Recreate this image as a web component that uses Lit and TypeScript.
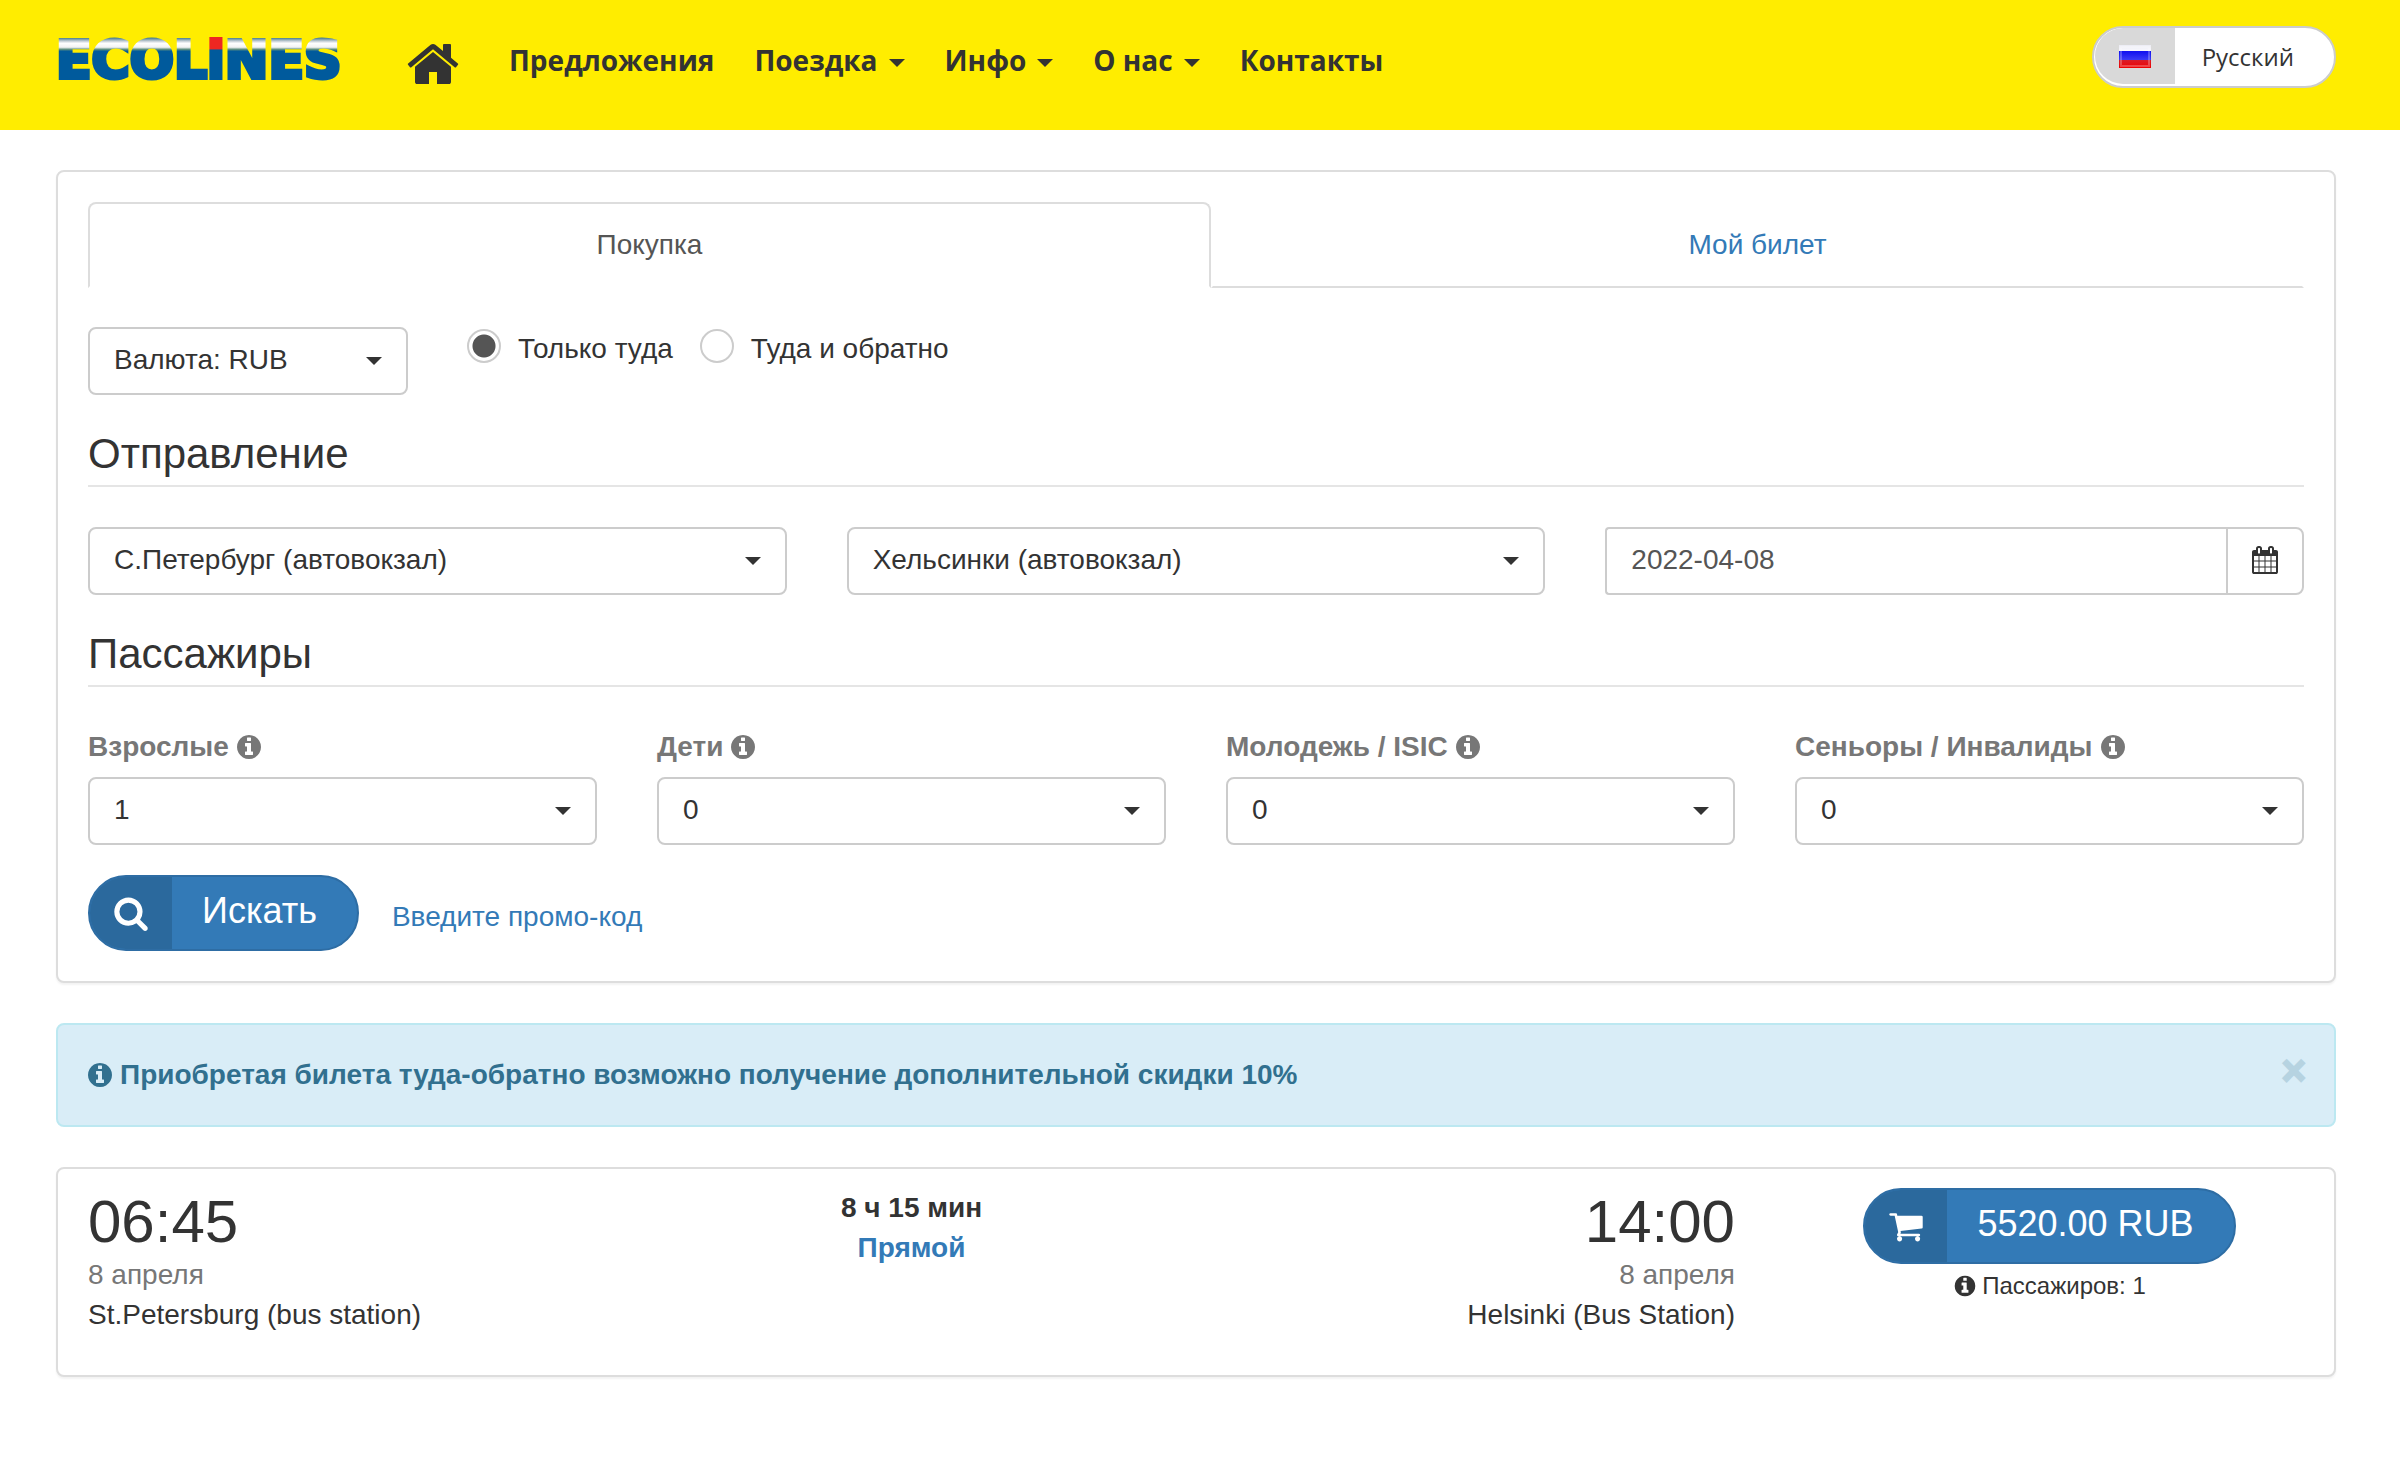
import { LitElement, html, css, svg } from "lit";
import { customElement, property, state } from "lit/decorators.js";

const ICONS: Record<string, string> = {
  home: "M1472 992v480q0 26-19 45t-45 19h-384v-384h-256v384h-384q-26 0-45-19t-19-45v-480q0-1 .5-3t.5-3l575-474 575 474q1 2 1 6zm223-69l-62 74q-8 9-21 11h-3q-13 0-21-7l-692-577-692 577q-12 8-24 7-13-2-21-11l-62-74q-8-10-7-23.5t11-21.5l719-599q32-26 76-26t76 26l244 204v-195q0-14 9-23t23-9h192q14 0 23 9t9 23v408l219 182q10 8 11 21.5t-7 23.5z",
  info: "M1152 1376v-160q0-14-9-23t-23-9h-96v-512q0-14-9-23t-23-9h-320q-14 0-23 9t-9 23v160q0 14 9 23t23 9h96v320h-96q-14 0-23 9t-9 23v160q0 14 9 23t23 9h448q14 0 23-9t9-23zm-128-896v-160q0-14-9-23t-23-9h-192q-14 0-23 9t-9 23v160q0 14 9 23t23 9h192q14 0 23-9t9-23zm640 416q0 209-103 385.5t-279.5 279.5-385.5 103-385.5-103-279.5-279.5-103-385.5 103-385.5 279.5-279.5 385.5-103 385.5 103 279.5 279.5 103 385.5z",
  search: "M1216 832q0-185-131.5-316.5t-316.5-131.5-316.5 131.5-131.5 316.5 131.5 316.5 316.5 131.5 316.5-131.5 131.5-316.5zm512 832q0 52-38 90t-90 38q-54 0-90-38l-343-342q-179 124-399 124-143 0-273.5-55.5t-225-150-150-225-55.5-273.5 55.5-273.5 150-225 225-150 273.5-55.5 273.5 55.5 225 150 150 225 55.5 273.5q0 220-124 399l343 343q37 37 37 90z",
  cart: "M704 1536q0 52-38 90t-90 38-90-38-38-90 38-90 90-38 90 38 38 90zm896 0q0 52-38 90t-90 38-90-38-38-90 38-90 90-38 90 38 38 90zm128-1088v512q0 24-16.5 42.5t-40.5 21.5l-1044 122q13 60 13 70 0 16-24 64h920q26 0 45 19t19 45-19 45-45 19h-1024q-26 0-45-19t-19-45q0-11 8-31.5t16-36 21.5-40 15.5-29.5l-177-823h-204q-26 0-45-19t-19-45 19-45 45-19h256q16 0 28.5 6.5t19.5 15.5 13 24.5 8 26 5.5 29.5 4.5 26h1201q26 0 45 19t19 45z",
  calendar: "M192 1664h288v-288h-288v288zm352 0h320v-288h-320v288zm-352-352h288v-320h-288v320zm352 0h320v-320h-320v320zm-352-384h288v-288h-288v288zm736 736h320v-288h-320v288zm-384-736h320v-288h-320v288zm768 736h288v-288h-288v288zm-384-352h320v-320h-320v320zm-352-864v-288q0-13-9.5-22.5t-22.5-9.5h-64q-13 0-22.5 9.5t-9.5 22.5v288q0 13 9.5 22.5t22.5 9.5h64q13 0 22.5-9.5t9.5-22.5zm736 864h288v-320h-288v320zm-384-384h320v-288h-320v288zm384 0h288v-288h-288v288zm32-480v-288q0-13-9.5-22.5t-22.5-9.5h-64q-13 0-22.5 9.5t-9.5 22.5v288q0 13 9.5 22.5t22.5 9.5h64q13 0 22.5-9.5t9.5-22.5zm384-64v1280q0 52-38 90t-90 38h-1408q-52 0-90-38t-38-90v-1280q0-52 38-90t90-38h128v-96q0-66 47-113t113-47h64q66 0 113 47t47 113v96h384v-96q0-66 47-113t113-47h64q66 0 113 47t47 113v96h128q52 0 90 38t38 90z",
};

const icon = (name: string, cls = "icon") => html`
  <svg class=${cls} viewBox="0 0 1792 1792" aria-hidden="true">${svg`<path d=${ICONS[name]} fill="currentColor"></path>`}</svg>`;

const base = css`
  * { box-sizing: border-box; }
  :host { display: block; }
  button, input, select { font: inherit; color: inherit; margin: 0; }
  a { color: #337ab7; text-decoration: none; }
  .icon { width: 28px; height: 28px; flex: none; display: block; }
`;

@customElement("site-header")
class SiteHeader extends LitElement {
  static styles = [base, css`
    .bar {
      display: flex; align-items: flex-start; justify-content: space-between;
      height: 130px; padding: 0 64px 0 56px;
      background: #ffed00; color: #333;
      font-family: "Open Sans", "Noto Sans", sans-serif;
    }
    .left { display: flex; align-items: center; height: 120px; }
    .logo { display: block; margin-right: 47px; }
    .mark { display: block; width: 302px; height: 80px; overflow: visible; }
    .word { font: bold 52px "DejaVu Sans", sans-serif; fill: url(#ink); stroke: url(#ink); stroke-width: 4px; }
    .dot { fill: url(#reddot); stroke: url(#reddot); }
    .home { color: #333; padding-top: 8px; }
    .big { width: 56px; height: 56px; display: block; }
    .nav { display: flex; gap: 40px; margin-left: 48px; }
    .link {
      display: flex; align-items: center; gap: 11px;
      color: #333; font-weight: 700; font-size: 28px; line-height: 40px;
    }
    .caret { border: 8px solid transparent; border-top-color: #333; border-bottom: 0; margin-top: 6px; }
    .lang {
      display: flex; align-items: stretch; height: 62px; margin-top: 26px; padding: 0;
      border: 2px solid #ccc; border-radius: 31px; background: #fff; overflow: hidden;
      font-size: 24px;
    }
    .flagbox {
      display: flex; align-items: center; justify-content: center;
      width: 80px; margin: 0 0 2px 1px; background: #d9d9d9; border-radius: 29px 0 0 29px;
    }
    .flag { width: 32px; height: 23px; display: block; }
    .name { padding: 0 40px 0 27px; align-self: center; line-height: 40px; }
  `];

  private items = [
    { label: "Предложения", menu: false },
    { label: "Поездка", menu: true },
    { label: "Инфо", menu: true },
    { label: "О нас", menu: true },
    { label: "Контакты", menu: false },
  ];

  render() {
    return html`
      <header class="bar">
        <div class="left">
          <a class="logo" href="#">
            <svg class="mark" viewBox="0 0 302 80">
              <defs>
                <linearGradient id="ink" gradientUnits="userSpaceOnUse" x1="0" y1="18" x2="0" y2="62">
                  <stop offset="0" stop-color="#4a7f8c"></stop>
                  <stop offset=".07" stop-color="#c3ccd4"></stop>
                  <stop offset=".12" stop-color="#ffffff"></stop>
                  <stop offset=".21" stop-color="#f2f2f2"></stop>
                  <stop offset=".26" stop-color="#5f8f80"></stop>
                  <stop offset=".3" stop-color="#005a9c"></stop>
                </linearGradient>
                <linearGradient id="reddot" gradientUnits="userSpaceOnUse" x1="0" y1="18" x2="0" y2="62">
                  <stop offset=".25" stop-color="#ee2722"></stop>
                  <stop offset=".27" stop-color="#005a9c"></stop>
                </linearGradient>
              </defs>
              <text class="word" x="0" y="58">ECOL<tspan class="dot">i</tspan>NES</text>
            </svg>
          </a>
          <a class="home" href="#" aria-label="Главная">${icon("home", "big")}</a>
          <nav class="nav">
            ${this.items.map((i) => html`<a class="link" href="#">${i.label}${i.menu ? html`<span class="caret"></span>` : ""}</a>`)}
          </nav>
        </div>
        <button class="lang" type="button">
          <span class="flagbox">
            <svg class="flag" viewBox="0 0 32 23" aria-hidden="true">
              <defs>
                <linearGradient id="w" x2="0" y2="1"><stop offset="0" stop-color="#ececf4"></stop><stop offset="1" stop-color="#fafaff"></stop></linearGradient>
                <linearGradient id="b" x2="0" y2="1"><stop offset="0" stop-color="#1010f0"></stop><stop offset="1" stop-color="#3d3df5"></stop></linearGradient>
                <linearGradient id="r" x2="0" y2="1"><stop offset="0" stop-color="#d81c28"></stop><stop offset="1" stop-color="#f00000"></stop></linearGradient>
              </defs>
              <rect width="32" height="7" fill="url(#w)"></rect>
              <rect y="6" width="32" height="9" fill="url(#b)"></rect>
              <rect y="15" width="32" height="8" fill="url(#r)"></rect>
              <rect x="2" y="2" width="28" height="19" fill="none" stroke="#fff" stroke-opacity=".25" stroke-width="2"></rect>
            </svg>
          </span>
          <span class="name">Русский</span>
        </button>
      </header>`;
  }
}

@customElement("select-box")
class SelectBox extends LitElement {
  @property() label = "";
  @property() caption = "";
  @property({ type: Array }) options: string[] = [];

  static styles = [base, css`
    .field { display: flex; flex-direction: column; gap: 10px; }
    .caption {
      display: flex; align-items: center; gap: 6px;
      font-weight: 700; line-height: 40px; color: #777;
    }
    .box { display: grid; align-items: center; }
    .box::after {
      content: ""; grid-area: 1 / 1; justify-self: end; margin-right: 26px;
      border: 8px solid transparent; border-top-color: #333; border-bottom: 0; pointer-events: none;
    }
    .control {
      grid-area: 1 / 1; width: 100%; height: 68px; padding: 0 60px 2px 24px;
      appearance: none; background: #fff; border: 2px solid #ccc; border-radius: 8px;
      line-height: 40px;
    }
  `];

  render() {
    return html`
      <div class="field">
        ${this.caption ? html`<label class="caption" for="control">${this.caption}${icon("info")}</label>` : ""}
        <div class="box">
          <select class="control" id="control" aria-label=${this.caption || this.label}>
            ${this.options.map((o) => html`<option>${o}</option>`)}
          </select>
        </div>
      </div>`;
  }
}

@customElement("pill-button")
class PillButton extends LitElement {
  @property() icon = "";
  @property() text = "";

  static styles = [base, css`
    .pill {
      display: flex; height: 76px; padding: 0; overflow: hidden; white-space: nowrap;
      border: 2px solid #2e6da4; border-radius: 38px; background: #337ab7; color: #fff;
      font-size: 36px; line-height: 48px; cursor: pointer;
    }
    .side {
      display: flex; align-items: center; justify-content: center;
      width: 82px; background: #2b699d;
    }
    .glyph { width: 36px; height: 36px; display: block; }
    .text { padding: 10px 40px 0 30px; }
  `];

  render() {
    return html`
      <button class="pill" type="button">
        <span class="side">${icon(this.icon, "glyph")}</span><span class="text">${this.text}</span>
      </button>`;
  }
}

@customElement("search-panel")
class SearchPanel extends LitElement {
  @state() private trip = "one";

  static styles = [base, css`
    .panel {
      padding: 30px; background: #fff;
      border: 2px solid #ddd; border-radius: 8px; box-shadow: 0 2px 2px rgba(0, 0, 0, 0.05);
    }
    .tabs { display: grid; grid-template-columns: 1123fr 1093fr; margin-bottom: 39px; }
    .tab {
      height: 86px; padding: 20px; text-align: center; line-height: 40px;
      background: none; border: 2px solid transparent; border-bottom-color: #ddd; color: #337ab7;
    }
    .tab.active {
      color: #555; border-color: #ddd; border-bottom-color: #fff; border-radius: 8px 8px 0 0;
    }
    .top { display: flex; align-items: flex-start; gap: 59px; margin-bottom: 30px; }
    .currency { width: 320px; }
    .radios { display: flex; gap: 27px; padding-top: 2px; }
    .radio { display: flex; align-items: center; gap: 17px; line-height: 40px; }
    .mark {
      appearance: none; width: 34px; height: 34px; margin-bottom: 6px; background: #fff;
      border: 2px solid #ccc; border-radius: 50%;
    }
    .mark:checked { background: radial-gradient(circle, #555 11px, #fff 12px); }
    .legend {
      margin: 0 0 40px; padding-bottom: 2px; font-size: 42px; font-weight: 400; line-height: 58px;
      border-bottom: 2px solid #e5e5e5;
    }
    .three, .four { display: grid; gap: 60px; margin-bottom: 30px; }
    .three { grid-template-columns: repeat(3, 1fr); }
    .four { grid-template-columns: repeat(4, 1fr); }
    .date { display: flex; height: 68px; }
    .value {
      flex: 1; min-width: 0; padding: 0 24px 2px; color: #555; background: #fff;
      border: 2px solid #ccc; border-right: 0; border-radius: 4px 0 0 4px;
    }
    .pick {
      display: flex; align-items: center; justify-content: center; width: 78px; padding: 0 0 2px;
      background: #fff; border: 2px solid #ccc; border-radius: 0 8px 8px 0;
    }
    .actions { display: flex; align-items: center; gap: 33px; }
    .promo { padding-top: 7px; line-height: 40px; }
  `];

  private groups = [
    { caption: "Взрослые", options: ["1"] },
    { caption: "Дети", options: ["0"] },
    { caption: "Молодежь / ISIC", options: ["0"] },
    { caption: "Сеньоры / Инвалиды", options: ["0"] },
  ];

  private radio(value: string, label: string) {
    return html`<label class="radio"><input class="mark" type="radio" name="trip"
      .checked=${this.trip === value} @change=${() => (this.trip = value)} />${label}</label>`;
  }

  render() {
    return html`
      <section class="panel">
        <div class="tabs" role="tablist">
          <button class="tab active" type="button" role="tab">Покупка</button>
          <button class="tab" type="button" role="tab">Мой билет</button>
        </div>
        <div class="top">
          <select-box class="currency" label="Валюта" .options=${["Валюта: RUB"]}></select-box>
          <div class="radios">${this.radio("one", "Только туда")}${this.radio("both", "Туда и обратно")}</div>
        </div>
        <h2 class="legend">Отправление</h2>
        <div class="three">
          <select-box label="Откуда" .options=${["С.Петербург (автовокзал)"]}></select-box>
          <select-box label="Куда" .options=${["Хельсинки (автовокзал)"]}></select-box>
          <div class="date">
            <input class="value" type="text" value="2022-04-08" aria-label="Дата" />
            <button class="pick" type="button" aria-label="Календарь">${icon("calendar")}</button>
          </div>
        </div>
        <h2 class="legend">Пассажиры</h2>
        <div class="four">
          ${this.groups.map((g) => html`<select-box .caption=${g.caption} .options=${g.options}></select-box>`)}
        </div>
        <div class="actions">
          <pill-button icon="search" text="Искать"></pill-button>
          <a class="promo" href="#">Введите промо-код</a>
        </div>
      </section>`;
  }
}

@customElement("notice-bar")
class NoticeBar extends LitElement {
  static styles = [base, css`
    .notice {
      display: flex; align-items: center; gap: 6px; padding: 30px 28px;
      color: #31708f; background: #d9edf7; border: 2px solid #bce8f1; border-radius: 8px;
      font-weight: 700; line-height: 40px;
    }
    .close {
      margin-left: auto; padding: 0 0 8px; height: 40px; border: 0; background: none; opacity: 0.2;
      font-size: 42px; line-height: 32px; -webkit-text-stroke: 2px #31708f;
    }
  `];

  render() {
    return html`
      <div class="notice" role="alert">
        ${icon("info")}<span>Приобретая билета туда-обратно возможно получение дополнительной скидки 10%</span>
        <button class="close" type="button" aria-label="Закрыть">×</button>
      </div>`;
  }
}

@customElement("trip-card")
class TripCard extends LitElement {
  static styles = [base, css`
    .card {
      display: grid; grid-template-columns: repeat(4, 1fr); gap: 60px;
      padding: 19px 30px 40px; background: #fff; line-height: 40px;
      border: 2px solid #ddd; border-radius: 8px; box-shadow: 0 2px 2px rgba(0, 0, 0, 0.05);
    }
    .route { grid-column: span 3; display: grid; grid-template-columns: 1fr auto 1fr; }
    .time { font-size: 60px; line-height: 67px; }
    .day { color: #777; }
    .middle { text-align: center; font-weight: 700; }
    .end { text-align: right; }
    .buy { display: flex; flex-direction: column; align-items: center; }
    .count {
      display: flex; align-items: center; gap: 5px; font-size: 24px; line-height: 44px;
    }
    .small { width: 24px; height: 24px; display: block; }
  `];

  render() {
    return html`
      <article class="card">
        <div class="route">
          <div>
            <div class="time">06:45</div>
            <div class="day">8 апреля</div>
            <div>St.Petersburg (bus station)</div>
          </div>
          <div class="middle">
            <div>8 ч 15 мин</div>
            <a href="#">Прямой</a>
          </div>
          <div class="end">
            <div class="time">14:00</div>
            <div class="day">8 апреля</div>
            <div>Helsinki (Bus Station)</div>
          </div>
        </div>
        <div class="buy">
          <pill-button icon="cart" text="5520.00 RUB"></pill-button>
          <div class="count">${icon("info", "small")}<span>Пассажиров: 1</span></div>
        </div>
      </article>`;
  }
}

@customElement("app-root")
class AppRoot extends LitElement {
  static styles = css`
    :host {
      display: block; min-height: 100vh; background: #fff; color: #333;
      font: 28px/40px "Liberation Sans", Arial, sans-serif;
    }
    .content { display: flex; flex-direction: column; gap: 40px; padding: 40px 64px 88px 56px; }
  `;

  render() {
    return html`
      <site-header></site-header>
      <main class="content">
        <search-panel></search-panel>
        <notice-bar></notice-bar>
        <trip-card></trip-card>
      </main>`;
  }
}
